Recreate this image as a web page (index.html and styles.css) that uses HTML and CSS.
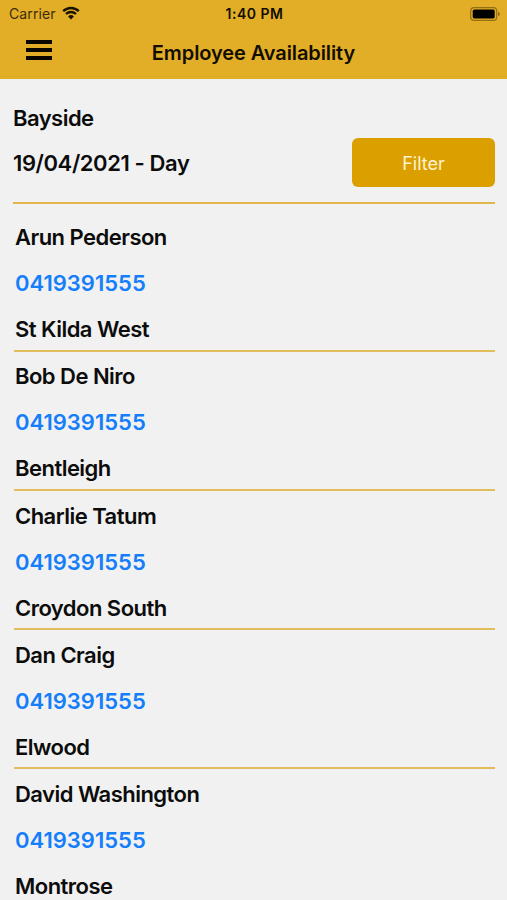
FILE: index.html
```html
<!DOCTYPE html>
<html lang="en">
<head>
<meta charset="UTF-8" />
<meta name="viewport" content="width=device-width, initial-scale=1" />
<title>Employee Availability</title>
<link rel="stylesheet" href="styles.css">
</head>
<body>

<header>
  <div class="status-bar">
    <div class="carrier">
      <span>Carrier</span>
      <svg class="wifi" viewBox="0 0 18 14" width="18" height="14">
        <path d="M1.2 5.1a11.2 11.2 0 0 1 15.6 0M4 8a7.2 7.2 0 0 1 10 0" fill="none" stroke="#1a1300" stroke-width="2.4" />
        <path d="M9 13.4L6.1 10.5a4.2 4.2 0 0 1 5.8 0z" fill="#1a1300" />
      </svg>
    </div>
    <span class="time">1:40 PM</span>
    <svg class="battery" viewBox="0 0 30 14" width="30" height="14">
      <rect x=".7" y=".7" width="26" height="12.6" rx="3.4" fill="none" stroke="#946f14" stroke-width="1.2" />
      <rect x="2.7" y="2.6" width="22" height="8.8" rx="1.6" fill="#000" />
      <path d="M28 4.8q2 .8 2 2.2t-2 2.2z" fill="#946f14" />
    </svg>
  </div>
  <nav>
    <button class="menu" aria-label="Menu"><i></i><i></i><i></i></button>
    <h1>Employee Availability</h1>
  </nav>
</header>

<main>
  <section class="summary">
    <div>
      <p class="region">Bayside</p>
      <p class="shift">19/04/2021 - Day</p>
    </div>
    <button class="filter">Filter</button>
  </section>

  <ul class="employees">
    <li>
      <p class="name">Arun Pederson</p>
      <a href="tel:0419391555">0419391555</a>
      <p class="suburb">St Kilda West</p>
    </li>
    <li>
      <p class="name">Bob De Niro</p>
      <a href="tel:0419391555">0419391555</a>
      <p class="suburb">Bentleigh</p>
    </li>
    <li>
      <p class="name">Charlie Tatum</p>
      <a href="tel:0419391555">0419391555</a>
      <p class="suburb">Croydon South</p>
    </li>
    <li>
      <p class="name">Dan Craig</p>
      <a href="tel:0419391555">0419391555</a>
      <p class="suburb">Elwood</p>
    </li>
    <li>
      <p class="name">David Washington</p>
      <a href="tel:0419391555">0419391555</a>
      <p class="suburb">Montrose</p>
    </li>
  </ul>
</main>

</body>
</html>
```
FILE: styles.css
```css
* {
  box-sizing: border-box;
}

body {
  margin: 0;
  height: 900px;
  overflow: hidden;
  display: flex;
  flex-direction: column;
  background: #f1f1f1;
  color: #0c0c0c;
  font-family: Inter, "Liberation Sans", sans-serif;
}

h1, p, ul {
  margin: 0;
  padding: 0;
}

button {
  border: 0;
  padding: 0;
  font-family: inherit;
}

/* top bar */
header {
  flex: none;
  height: 79px;
  background: #e2ad27;
  color: #120d00;
}

.status-bar {
  display: grid;
  grid-template-columns: 1fr auto 1fr;
  align-items: center;
  height: 27px;
  padding: 0 7px 0 9px;
  font-size: 14px;
}

.carrier {
  display: flex;
  align-items: center;
  gap: 6px;
  color: #3a2c08;
  letter-spacing: 0.1px;
}

.wifi {
  margin-top: -2px;
}

.time {
  font-weight: 600;
  letter-spacing: 0.5px;
}

.battery {
  justify-self: end;
}

nav {
  display: grid;
  grid-template-columns: 60px 1fr 60px;
  align-items: center;
  height: 51px;
}

.menu {
  display: flex;
  flex-direction: column;
  gap: 4px;
  width: 26px;
  margin: -5px 0 0 26px;
  background: none;
}

.menu i {
  height: 4px;
  background: #0a0700;
}

h1 {
  text-align: center;
  font-size: 20px;
  font-weight: 600;
  letter-spacing: -0.1px;
}

/* region, shift and filter */
.summary {
  display: flex;
  justify-content: space-between;
  align-items: flex-end;
  height: 125px;
  margin: 0 12px 0 13px;
  padding-bottom: 15px;
  border-bottom: 2px solid #e2b64a;
}

.region, .shift, .employees {
  font-size: 22px;
  line-height: 28px;
  font-weight: 600;
  letter-spacing: -0.53px;
}

.shift {
  margin: 17px 0 10px;
  letter-spacing: -0.4px;
}

.filter {
  width: 143px;
  height: 49px;
  border-radius: 6px;
  background: #dba000;
  color: #fff3d0;
  font-size: 18px;
  line-height: 24px;
  padding-top: 2px;
}

/* employee list */
.employees {
  list-style: none;
  margin: 8.25px 12px 0 14px;
}

.employees li {
  display: flex;
  flex-direction: column;
  align-items: flex-start;
  gap: 18px;
  padding: 10.75px 0 6.5px 1px;
  border-bottom: 2px solid #e2bd5c;
}

.employees a {
  color: #147efb;
  letter-spacing: 0;
  text-decoration: none;
}
```
